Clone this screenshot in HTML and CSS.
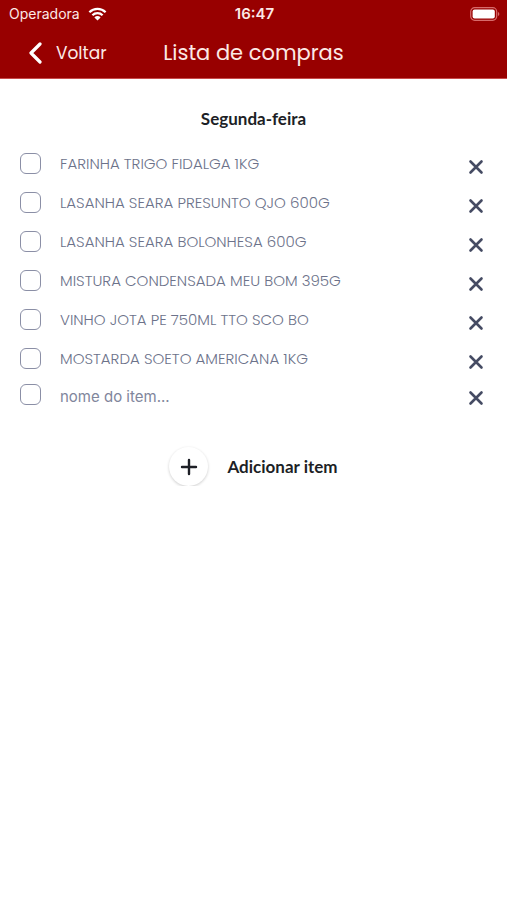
FILE: index.html
```html
<!DOCTYPE html>
<html lang="pt-BR">
<head>
<meta charset="utf-8">
<meta name="viewport" content="width=device-width, initial-scale=1">
<title>Lista de compras</title>
<link rel="stylesheet" href="styles.css">
</head>
<body>
<svg class="sprite" aria-hidden="true">
  <symbol id="x" viewBox="0 0 16 16"><path d="M2.5 2.5l11 11M13.5 2.5l-11 11" fill="none" stroke="currentColor" stroke-width="2.6" stroke-linecap="round"/></symbol>
</svg>
<header class="top">
  <div class="status">
    <span class="carrier">Operadora
      <svg class="wifi" viewBox="0 0 18 14" aria-hidden="true"><g fill="none" stroke="currentColor" stroke-width="2.3"><path d="M.9 5.2a11.6 11.6 0 0 1 16.2 0"/><path d="M3.9 8.3a7.3 7.3 0 0 1 10.2 0"/></g><path d="M5.9 10.4a4.4 4.4 0 0 1 6.2 0L9 13.6z" fill="currentColor"/></svg>
    </span>
    <span class="clock">16:47</span>
    <svg class="battery" viewBox="0 0 30 14" aria-hidden="true"><rect x=".7" y=".7" width="26" height="12.6" rx="4" fill="none" stroke="#d76b6b" stroke-width="1.2"/><rect x="2.6" y="2.6" width="22.2" height="8.8" rx="2" fill="#fff"/><path d="M28 5v4c1.8-.6 1.8-3.4 0-4z" fill="#d76b6b"/></svg>
  </div>
  <nav class="nav">
    <a class="back" href="#"><svg class="chevron" viewBox="0 0 14 22" aria-hidden="true"><path d="M11.5 2L2.5 11l9 9" fill="none" stroke="currentColor" stroke-width="3.2" stroke-linecap="round" stroke-linejoin="round"/></svg>Voltar</a>
    <h1 class="title">Lista de compras</h1>
  </nav>
</header>
<main>
  <h2 class="day">Segunda-feira</h2>
  <ul class="list">
    <li class="row"><input class="check" type="checkbox" id="i1"><label class="name" for="i1">FARINHA TRIGO FIDALGA 1KG</label><button class="remove" aria-label="Remover"><svg><use href="#x"/></svg></button></li>
    <li class="row"><input class="check" type="checkbox" id="i2"><label class="name" for="i2">LASANHA SEARA PRESUNTO QJO 600G</label><button class="remove" aria-label="Remover"><svg><use href="#x"/></svg></button></li>
    <li class="row"><input class="check" type="checkbox" id="i3"><label class="name" for="i3">LASANHA SEARA BOLONHESA 600G</label><button class="remove" aria-label="Remover"><svg><use href="#x"/></svg></button></li>
    <li class="row"><input class="check" type="checkbox" id="i4"><label class="name" for="i4">MISTURA CONDENSADA MEU BOM 395G</label><button class="remove" aria-label="Remover"><svg><use href="#x"/></svg></button></li>
    <li class="row"><input class="check" type="checkbox" id="i5"><label class="name" for="i5">VINHO JOTA PE 750ML TTO SCO BO</label><button class="remove" aria-label="Remover"><svg><use href="#x"/></svg></button></li>
    <li class="row"><input class="check" type="checkbox" id="i6"><label class="name" for="i6">MOSTARDA SOETO AMERICANA 1KG</label><button class="remove" aria-label="Remover"><svg><use href="#x"/></svg></button></li>
    <li class="row new"><input class="check" type="checkbox" aria-label="Novo item"><input class="name entry" type="text" placeholder="nome do item..." aria-label="Nome do item"><button class="remove" aria-label="Remover"><svg><use href="#x"/></svg></button></li>
  </ul>
  <button class="add"><span class="plus"><svg viewBox="0 0 18 18" aria-hidden="true"><path d="M9 2v14M2 9h14" fill="none" stroke="currentColor" stroke-width="2.4" stroke-linecap="round"/></svg></span>Adicionar item</button>
</main>
</body>
</html>
```
FILE: styles.css
```css
* { box-sizing: border-box; }
body { margin: 0; background: #fff; font-family: Poppins, "Open Sans", sans-serif; color: #1d1f26; }
button { border: 0; background: none; padding: 0; color: inherit; cursor: pointer; }
svg { display: block; }
.sprite { display: none; }

.top { background: #980000; color: #fce9e6; border-bottom: 1px solid #c84b4b; }
.status, .nav { display: grid; grid-template-columns: 1fr auto 1fr; align-items: center; }
.status { height: 28px; padding: 0 7px 0 9px; font: 14px/20px Inter, sans-serif; }
.carrier { display: flex; align-items: center; gap: 8px; }
.wifi { width: 19px; height: 14px; color: #fff; }
.clock { font-size: 15px; font-weight: 600; }
.battery { width: 30px; height: 14px; justify-self: end; }
.nav { height: 50px; padding: 0 28px; }
.back { display: flex; align-items: center; gap: 13px; color: inherit; font-size: 17px; text-decoration: none; }
.chevron { width: 15px; height: 22px; color: #fff; }
.title { margin: 0; font-size: 21px; line-height: 28px; font-weight: 400; }

.day { margin: 28px 0 22px; text-align: center; font: 700 17px/24px Lato, sans-serif; }
.list { margin: 0; padding: 0 20px; list-style: none; }
.row { display: flex; align-items: flex-start; height: 39px; }
.row:nth-last-child(2) { height: 36px; }
.check { appearance: none; flex: none; width: 21px; height: 21px; margin: 0; border: 1px solid #8b8fa6; border-radius: 6px; background: #fff; }
.check:checked { background: #8b8fa6; }
.name { flex: 1; min-width: 0; margin-left: 19px; font-size: 15px; line-height: 22px; font-weight: 300; color: #6c728a; }
.entry { height: 24px; padding: 0; border: 0; outline: 0; background: none; font-family: Inter, sans-serif; font-weight: 400; }
.entry::placeholder { color: #81869c; opacity: 1; }
.remove { flex: none; padding-top: 6px; margin-right: 3px; color: #454b63; }
.remove svg { width: 16px; height: 16px; }

.add { display: flex; align-items: center; gap: 19px; margin: 24px auto 0; font: 700 17px/24px Lato, sans-serif; color: #1d1f26; }
.plus { display: grid; place-items: center; width: 39px; height: 39px; border-radius: 50%; background: #fff; box-shadow: 0 1px 3px rgba(0, 0, 0, .2); }
.plus svg { width: 18px; height: 18px; }
```
